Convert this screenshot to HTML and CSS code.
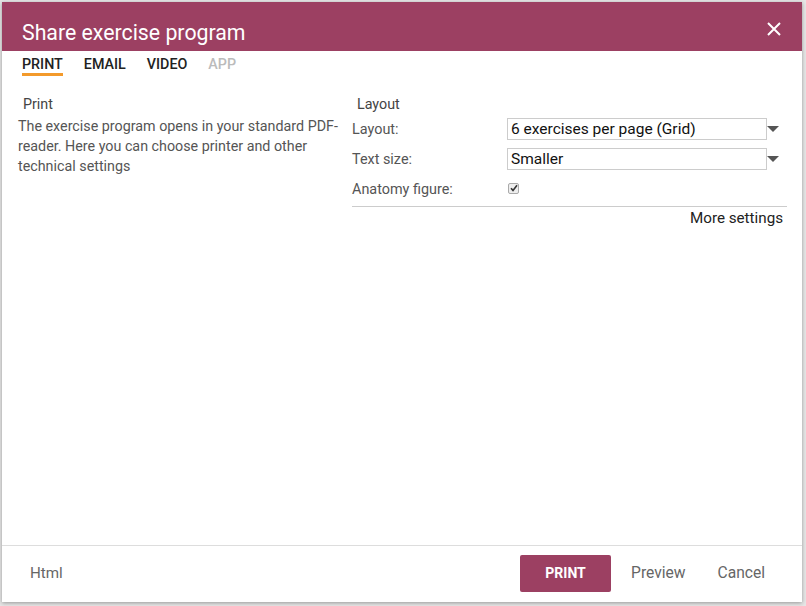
FILE: index.html
```html
<!DOCTYPE html>
<html>
<head>
<meta charset="utf-8">
<link rel="stylesheet" href="styles.css">
</head>
<body>
<div class="dialog">
  <div class="header">
    <div class="title">Share exercise program</div>
    <svg class="close" width="16" height="16" viewBox="0 0 16 16"><path d="M2 2L14 14M14 2L2 14" stroke="#fff" stroke-width="2"/></svg>
  </div>
  <div class="tabs">
    <div class="tab active">PRINT</div>
    <div class="tab">EMAIL</div>
    <div class="tab">VIDEO</div>
    <div class="tab disabled">APP</div>
  </div>
  <div class="content">
    <div class="col-left">
      <div class="heading">Print</div>
      <p class="desc">The exercise program opens in your standard PDF-reader. Here you can choose printer and other technical settings</p>
    </div>
    <div class="col-right">
      <div class="heading">Layout</div>
      <div class="row">
        <div class="label">Layout:</div>
        <div class="select"><div class="box">6 exercises per page (Grid)</div><div class="arrow"></div></div>
      </div>
      <div class="row">
        <div class="label">Text size:</div>
        <div class="select"><div class="box">Smaller</div><div class="arrow"></div></div>
      </div>
      <div class="row">
        <div class="label">Anatomy figure:</div>
        <div class="check"><svg width="8" height="8" viewBox="0 0 8 8"><path d="M1 4.2L3 6.4L7 1.2" stroke="#333" stroke-width="1.6" fill="none"/></svg></div>
      </div>
      <div class="divider"></div>
      <div class="more">More settings</div>
    </div>
  </div>
  <div class="footer">
    <div class="link html">Html</div>
    <div class="spacer"></div>
    <div class="btn">PRINT</div>
    <div class="link">Preview</div>
    <div class="link">Cancel</div>
  </div>
</div>
</body>
</html>
```

FILE: styles.css
```css
html, body {
  margin: 0;
  padding: 0;
  width: 806px;
  height: 606px;
  overflow: hidden;
  background: #e6e6e6;
  font-family: Roboto, "Liberation Sans", sans-serif;
}
.dialog {
  margin: 2px 0 0 2px;
  width: 800px;
  height: 600px;
  background: #fff;
  box-shadow: 0 1px 4px rgba(0,0,0,0.35);
  display: flex;
  flex-direction: column;
}
.header {
  height: 49px;
  background: #9c4062;
  display: flex;
  align-items: center;
  padding: 0 20px 0 20px;
  flex: none;
}
.title {
  color: #fff;
  font-size: 21.3px;
  flex: 1;
  padding-top: 11px;
}
.close {
  margin-top: 4px;
}
.tabs {
  display: flex;
  gap: 21px;
  padding: 5px 0 0 20px;
  flex: none;
}
.tab {
  font-size: 14.3px;
  font-weight: 500;
  color: #222;
  padding-bottom: 1px;
  border-bottom: 3px solid transparent;
  line-height: 16px;
}
.tab.active {
  border-bottom-color: #f39a2b;
}
.tab.disabled {
  color: #bbb;
}
.content {
  flex: 1;
  display: flex;
  padding: 18px 0 0 16px;
}
.col-left {
  width: 334px;
}
.heading {
  font-size: 14.3px;
  color: #444;
  line-height: 20px;
  padding-left: 5px;
}
.desc {
  margin: 2px 0 0 2px;
  font-size: 14.3px;
  line-height: 20px;
  color: #555;
}
.col-left .desc { margin-left: 0; }
.col-right {
  width: 435px;
}
.row {
  display: flex;
  align-items: center;
  height: 30px;
}
.label {
  width: 155px;
  font-size: 14.4px;
  color: #555;
}
.select {
  display: flex;
  align-items: center;
}
.box {
  width: 255px;
  height: 20px;
  border: 1px solid #ccc;
  padding-left: 3px;
  font-size: 15.5px;
  color: #111;
  line-height: 20px;
}
.arrow {
  width: 0;
  height: 0;
  border-left: 6px solid transparent;
  border-right: 6px solid transparent;
  border-top: 6px solid #555;
}
.check {
  width: 9px;
  height: 9px;
  border: 1px solid #aaa;
  border-radius: 2px;
  background: #eee;
  display: flex;
  align-items: center;
  justify-content: center;
  margin-left: 1px;
  margin-top: -2px;
}
.divider {
  border-top: 1px solid #ccc;
  margin-top: 2px;
}
.more {
  text-align: right;
  font-size: 15.2px;
  color: #222;
  padding-right: 4px;
  margin-top: 2px;
}
.footer {
  flex: none;
  height: 54px;
  padding-bottom: 2px;
  border-top: 1px solid #ddd;
  display: flex;
  align-items: center;
  padding-left: 28px;
  padding-right: 37px;
}
.spacer { flex: 1; }
.link {
  font-size: 15.6px;
  color: #666;
}
.html { font-size: 15.2px; }
.btn {
  width: 91px;
  height: 37px;
  background: #9c4062;
  color: #fff;
  font-weight: 700;
  font-size: 14px;
  border-radius: 2px;
  display: flex;
  align-items: center;
  justify-content: center;
  margin-right: 20px;
}
.footer .link + .link { margin-left: 32px; }
```
